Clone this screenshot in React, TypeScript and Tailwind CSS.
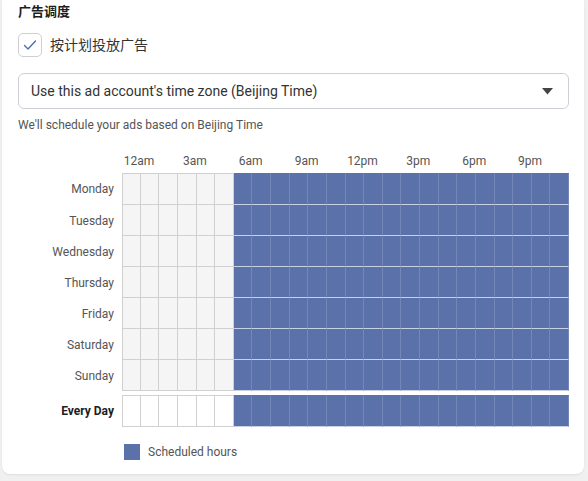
import React from "react";

const days = ["Monday", "Tuesday", "Wednesday", "Thursday", "Friday", "Saturday", "Sunday"];
const hourLabels = ["12am", "3am", "6am", "9am", "12pm", "3pm", "6pm", "9pm"];
const hours = Array.from({ length: 24 }, (_, i) => i);

function Cell({ on, first, top, everyDay }: { on: boolean; first: boolean; top: boolean; everyDay?: boolean }) {
  const base = on
    ? "bg-[#5b71a9] border-r-[#7587b8] border-b-[#c9d1e5] border-t-[#5b71a9] border-l-[#7587b8]"
    : everyDay
    ? "bg-white border-r-[#d0d0d0] border-b-[#d0d0d0] border-t-[#d0d0d0] border-l-[#d0d0d0]"
    : "bg-[#f5f5f5] border-r-[#d0d0d0] border-b-[#d0d0d0] border-t-[#d0d0d0] border-l-[#d0d0d0]";
  return (
    <div
      className={`${base} border-r border-b ${top ? "border-t" : ""} ${first ? "border-l" : ""} ${
        everyDay && on ? "border-b-[#a3abbd]" : ""
      }`}
    />
  );
}

function Row({ label, everyDay }: { label: string; everyDay?: boolean }) {
  return (
    <div className="flex">
      <div
        className={`w-[104px] pr-2 text-right text-[12px] flex items-center justify-end ${
          everyDay ? "font-bold text-[#1c1e21]" : "text-[#555]"
        }`}
      >
        {label}
      </div>
      <div className={`grid grid-cols-24 w-[447px] ${everyDay ? "h-[32px]" : "h-[31px]"}`}>
        {hours.map((h) => (
          <Cell key={h} on={h >= 6} first={h === 0} top={!!everyDay} everyDay={everyDay} />
        ))}
      </div>
    </div>
  );
}

export default function App() {
  return (
    <div
      className="w-[588px] h-[481px] bg-[#f0f0f0] overflow-hidden"
      style={{ fontFamily: "Roboto, 'Noto Sans CJK SC', sans-serif" }}
    >
      <div className="ml-[2px] w-[582px] h-[474px] bg-white rounded-b-lg shadow-[0_1px_2px_rgba(0,0,0,0.08)] pl-4 pr-[15px]">
        {/* Title */}
        <div className="pt-[3px] h-[20px] leading-[17px] text-[13px] font-semibold text-[#1c1e21]">广告调度</div>

        {/* Checkbox */}
        <div className="mt-[13px] flex items-center gap-[8px]">
          <div className="w-[24px] h-[24px] rounded-[5px] border border-[#ccd0d5] bg-white flex items-center justify-center">
            <svg width="16" height="16" viewBox="0 0 16 16" fill="none">
              <path d="M2.5 8.5 L6 12 L13.5 4" stroke="#4a6fb5" strokeWidth="1.4" strokeLinecap="round" strokeLinejoin="round" />
            </svg>
          </div>
          <span className="text-[14px] text-[#333]">按计划投放广告</span>
        </div>

        {/* Select */}
        <div className="mt-[16px] h-[36px] border border-[#ccd0d5] rounded-md flex items-center justify-between pl-[12px] pr-[15px]">
          <span className="text-[14px] text-[#333]">Use this ad account's time zone (Beijing Time)</span>
          <svg width="11" height="7" viewBox="0 0 11 7">
            <path d="M0 0 H11 L5.5 6.5 Z" fill="#444" />
          </svg>
        </div>

        {/* Help text */}
        <div className="mt-[8px] h-[16px] leading-[16px] text-[12px] text-[#555]">
          We'll schedule your ads based on Beijing Time
        </div>

        {/* Hour labels */}
        <div className="mt-[20px] flex h-[20px]">
          <div className="w-[104px]" />
          <div className="w-[447px] grid grid-cols-8">
            {hourLabels.map((l) => (
              <div key={l} className="w-[34px] text-center text-[12px] leading-[16px] text-[#555]">
                {l}
              </div>
            ))}
          </div>
        </div>

        {/* Days grid */}
        <div className="flex flex-col">
          {days.map((d, i) => (
            <div key={d} className="flex">
              <div className="w-[104px] pr-2 text-right text-[12px] flex items-center justify-end text-[#555]">
                {d}
              </div>
              <div className={`grid grid-cols-24 w-[447px] ${i === 0 ? "h-[32px]" : "h-[31px]"}`}>
                {hours.map((h) => (
                  <Cell key={h} on={h >= 6} first={h === 0} top={i === 0} />
                ))}
              </div>
            </div>
          ))}
        </div>

        {/* Every day */}
        <div className="mt-[4px]">
          <Row label="Every Day" everyDay />
        </div>

        {/* Legend */}
        <div className="mt-[16px] flex items-center pl-[106px] gap-[8px]">
          <div className="w-[16px] h-[16px] bg-[#5b71a9]" />
          <span className="text-[12px] text-[#555]">Scheduled hours</span>
        </div>
      </div>
    </div>
  );
}
